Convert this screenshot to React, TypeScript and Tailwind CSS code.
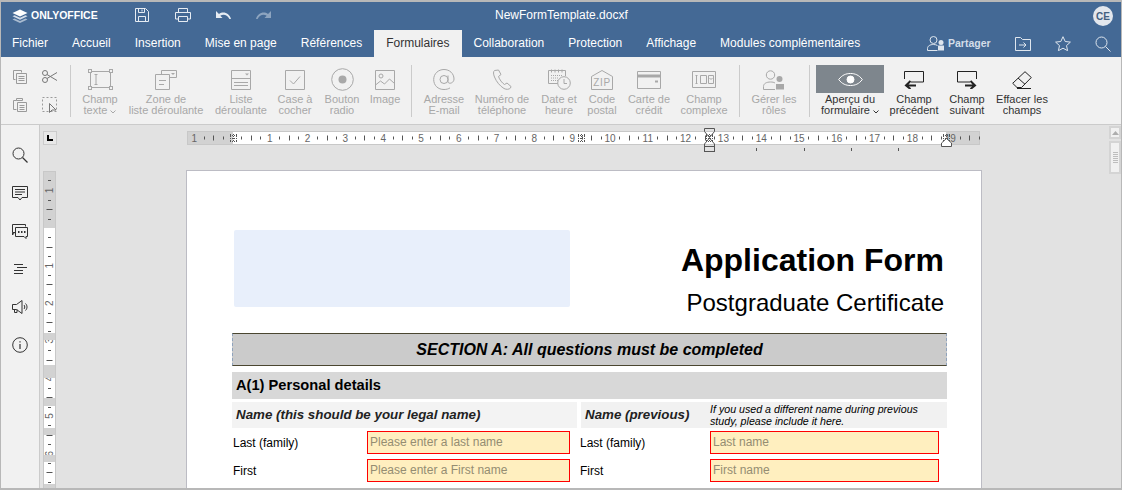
import React from "react";

const S = ({ w, h, children, c = "currentColor", cls = "" }: { w: number; h: number; children: React.ReactNode; c?: string; cls?: string }) => (
  <svg width={w} height={h} viewBox={`0 0 ${w} ${h}`} fill="none" stroke={c} strokeWidth={1} className={"block shrink-0 " + cls}>
    {children}
  </svg>
);

const Logo = () => (
  <S w={16} h={14}>
    <path d="M8 0.5 15.5 4 8 7.5 0.5 4Z" fill="#fff" stroke="none" />
    <path d="M2.5 6.2 8 8.8 13.5 6.2 15.5 7.2 8 10.8 0.5 7.2Z" fill="#d5deea" stroke="none" />
    <path d="M2.5 9.4 8 12 13.5 9.4 15.5 10.4 8 14 0.5 10.4Z" fill="#a9bbd0" stroke="none" />
  </S>
);
const Save = () => (
  <S w={14} h={14} c="#e6ecf3">
    <path d="M.5.5h10l3 3v10H.5z" />
    <path d="M3.5.5v4h6v-4M7 1.5v2M3.5 13.5v-5h7v5" />
  </S>
);
const Print = () => (
  <S w={16} h={14} c="#e6ecf3">
    <path d="M3.5 4V.5h9V4M3.5 11H.5V4.5h15V11h-3" />
    <path d="M3.5 8.5h9v5h-9z" />
  </S>
);
const Undo = ({ o = 1 }: { o?: number }) => (
  <svg width={15} height={8} viewBox="0 0 15 8" className="block" opacity={o}>
    <path d="M0 0v7h6.5L4.3 4.8C7 2.8 11 3.2 13.4 8H15C13.6 2.5 7.5-.5 3 3Z" fill="#e6ecf3" />
  </svg>
);
const ISize = ({ w, h, children }: { w: number; h: number; children: React.ReactNode }) => <S w={w} h={h}>{children}</S>;

const icons: Record<string, React.ReactNode> = {
  text: (
    <ISize w={25} h={21}>
      <rect x="2.5" y="2.5" width="20" height="16" />
      <g fill="#f1f1f1">
        <rect x=".5" y=".5" width="3" height="3" /><rect x="21.5" y=".5" width="3" height="3" />
        <rect x=".5" y="17.5" width="3" height="3" /><rect x="21.5" y="17.5" width="3" height="3" />
      </g>
      <path d="M6.5 5.5h3M6.5 15.5h3M8 5.5v10" />
    </ISize>
  ),
  combo: (
    <ISize w={22} h={20}>
      <path d="M.5 4.5h14v15H.5zM14.5 7.5h7V.5h-15v4" />
      <path d="M16 3l2 2 2-2z" fill="currentColor" stroke="none" />
      <path d="M4 10.5h7M4 14.5h5" />
    </ISize>
  ),
  list: (
    <ISize w={20} h={20}>
      <path d="M.5.5h19v19H.5zM.5 8.5h19" />
      <path d="M14 3.5l2 2 2-2z" fill="currentColor" stroke="none" />
      <path d="M3 12.5h14M3 15.5h14" />
    </ISize>
  ),
  check: (
    <ISize w={20} h={20}>
      <path d="M.5.5h19v19H.5z" />
      <path d="M5 10.5l3.5 3.5L15 6.5" />
    </ISize>
  ),
  radio: (
    <ISize w={23} h={23}>
      <circle cx="11.5" cy="11.5" r="10.8" />
      <circle cx="11.5" cy="11.5" r="4" fill="currentColor" stroke="none" />
    </ISize>
  ),
  image: (
    <ISize w={20} h={20}>
      <path d="M.5.5h19v19H.5z" />
      <circle cx="6" cy="6" r="2" />
      <path d="M.5 15l5-4 4 3 5-5 5 4.5" />
    </ISize>
  ),
  at: (
    <ISize w={22} h={21}>
      <circle cx="11" cy="10.5" r="4" />
      <path d="M15 6.5v6c0 3 6 2 6-2.5C21 4.5 16.5.5 11 .5S.7 4.5.7 10.5 5 20.5 11 20.5c2.5 0 4.5-.6 6-1.6" />
    </ISize>
  ),
  phone: (
    <ISize w={19} h={21}>
      <path d="M1.5 1.5C.2 2.5.2 5 1.5 8c2 5 5.5 9 9.5 11.5 2.5 1.3 5 1 6.5-.5l.5-1.5-4-3.5-2.5 1.5C9 14 6.5 10.500 5.500 7.500l2.500-2-2.500-4.500z" />
    </ISize>
  ),
  date: (
    <ISize w={23} h={21}>
      <path d="M13 14.500H.5V1.500h17V7" />
      <path d="M3.500.5v3M7 .5v3M10.500 .5v3M14 .5v3" />
      <path d="M3 6.500h12M3 9h8M3 11.500h8" strokeDasharray="1 1" />
      <circle cx="16" cy="14" r="6.300" fill="#f1f1f1" />
      <path d="M16 10v4.500h3" />
    </ISize>
  ),
  zip: (
    <svg width={22} height={20} viewBox="0 0 22 20" fill="none" stroke="currentColor" className="block">
      <path d="M.5 19.500V6.500L11 .5l10.500 6v13z" />
      <text x="11" y="16" textAnchor="middle" fontSize="10" fill="currentColor" stroke="none" letterSpacing=".6" fontFamily="'Liberation Sans',sans-serif">ZIP</text>
    </svg>
  ),
  card: (
    <ISize w={24} h={18}>
      <path d="M.5.5h23v17H.5z" />
      <path d="M.5 5h23" strokeWidth="3" />
      <path d="M18 10.500h3" strokeWidth="2" />
    </ISize>
  ),
  complex: (
    <ISize w={24} h={17}>
      <path d="M.5.5h23v16H.5zM8.500 4.500h6v8h-6zM16.500 4.500h5v8h-5z" />
      <path d="M3.500 4.500h2M3.500 12.500h2M4.500 4.500v8" />
      <path d="M17.500 7l1.500 1.500L20.500 7" />
    </ISize>
  ),
  roles: (
    <ISize w={22} h={20}>
      <circle cx="7.500" cy="5" r="4.200" />
      <path d="M.5 19.500v-3c0-3 3-4.500 7-4.500 2 0 3.500.3 4.500 1M.5 19.500h11.500" />
      <circle cx="16.500" cy="9" r="3" fill="currentColor" stroke="none" />
      <path d="M13 19.500v-5.500h8v5.500z" fill="currentColor" stroke="none" />
    </ISize>
  ),
  prev: (
    <S w={20} h={18} c="#222">
      <path d="M.5 8V.5h19V11H7" />
      <path d="M12 14.500H2M6.500 10l-4.500 4.500L6.500 18" strokeWidth="2" />
    </S>
  ),
  next: (
    <S w={20} h={18} c="#222">
      <path d="M19.500 8V.5H.5V11H13" />
      <path d="M8 14.500h10M13.500 10l4.500 4.500L13.500 18" strokeWidth="2" />
    </S>
  ),
  eraser: (
    <S w={20} h={18} c="#222">
      <path d="M13 .7l6.300 5.800L9.500 16.500H5L.7 12.300z" />
      <path d="M6 7l7 6.300" />
      <path d="M5 17.500h14" />
    </S>
  ),
};

type It = { w: number; l: string[]; i: string; on?: boolean; ch?: boolean };

const Item = ({ w, l, i, on, ch }: It) => (
  <div className={"flex flex-col items-center shrink-0 " + (on ? "text-[#333]" : "text-[#a8a8a8]")} style={{ width: w }}>
    <div className="h-[37px] pt-[8px] flex items-center justify-center pb-0">{icons[i]}</div>
    <div className="text-[11px] leading-[11px] whitespace-nowrap flex flex-col items-center">
      {l.map((t, k) => (
        <div key={k} className="flex items-center gap-[3px]">
          {t}
          {ch && k === l.length - 1 && (
            <svg width="6" height="4" viewBox="0 0 6 4" fill="none" stroke="currentColor" className="mt-[2px]"><path d="M.5.5 3 3 5.500.5" /></svg>
          )}
        </div>
      ))}
    </div>
  </div>
);

const Sep = ({ cls = "" }: { cls?: string }) => <div className={"w-px h-[52px] mt-[8px] bg-[#cbcbcb] shrink-0 " + cls} />;

const HRuler = () => {
  const els: React.ReactNode[] = [];
  for (let k = -1; k <= 19; k++) {
    const b = 45 + k * 37.8;
    if (k !== 0)
      els.push(<text key={"n" + k} x={b} y={10.500} textAnchor="middle" fontSize="10" fill="#666" fontFamily="'Liberation Sans',sans-serif">{Math.abs(k)}</text>);
    [[0.25, 3], [0.5, 5], [0.75, 3]].forEach(([f, h]) => {
      const x = Math.round(b + f * 37.8) + 0.5;
      els.push(<line key={k + "t" + f} x1={x} x2={x} y1={7 - h / 2} y2={7 + h / 2} stroke="#555" />);
    });
  }
  const grid = (x: number) => (
    <g key={x} stroke="#555">
      <path d={`M${x - 2.500} 3v8M${x + .500} 3v8M${x + 3.500} 3v8M${x - 3} 4.500h7M${x - 3} 7.500h7M${x - 3} 10.500h7`} strokeDasharray="1 1" />
    </g>
  );
  return (
    <svg width={793} height={14} viewBox="0 0 793 14" className="block overflow-visible shrink-0">
      <rect x=".5" y=".5" width="792" height="13" fill="#d2d2d2" stroke="#c8c8c8" />
      <rect x="46" y="1" width="713" height="12" fill="#fff" />
      {els}
      {grid(46)}
      {grid(394)}
      {grid(522)}
      {grid(759)}
      <path d="M517.500-2.500h10v3l-5 6-5-6z" fill="none" stroke="#555" />
      <path d="M522.500 7l5 6v2.500h-10V13z" fill="none" stroke="#555" />
      <rect x="517.500" y="15.500" width="10" height="5" fill="#e2e2e2" stroke="#555" />
      <path d="M754.500 15.500V12l5-4.500 5 4.500v3.500z" fill="#fff" stroke="#555" />
      {[569, 617, 664, 711].map((x) => <line key={x} x1={x + .5} x2={x + .5} y1={17} y2={20} stroke="#555" />)}
    </svg>
  );
};

const VRuler = () => {
  const cover: [number, number][] = [[333, 340], [365, 378], [398, 406], [428, 435], [455, 462], [484, 490]];
  const els: React.ReactNode[] = [];
  els.push(<line key="top" y1={9.500} y2={9.500} x1={5} x2={8} stroke="#555" />);
  for (let k = -1; k <= 7; k++) {
    const b = 57 + k * 37.6;
    if (k !== 0 && b < 319)
      els.push(<text key={"n" + k} x={0} y={0} transform={`translate(9.500 ${b}) rotate(-90)`} textAnchor="middle" fontSize="10" fill="#666" fontFamily="'Liberation Sans',sans-serif">{Math.abs(k)}</text>);
    [[0.25, 3], [0.5, 6], [0.75, 3]].forEach(([f, h]) => {
      const y = Math.round(b + f * 37.6) + 0.5;
      els.push(<line key={k + "t" + f} y1={y} y2={y} x1={6.500 - h / 2} x2={6.500 + h / 2} stroke="#555" />);
    });
  }
  return (
    <svg width={13} height={319} viewBox="0 0 13 319" className="block shrink-0">
      <rect x=".5" y=".5" width="12" height="320" fill="#d2d2d2" stroke="#c8c8c8" />
      <rect x="1" y="57" width="11" height="262" fill="#fff" />
      {els}
      {cover.map(([a, b]) => <rect key={a} x="1" y={a - 171} width="11" height={b - a} fill="#d2d2d2" />)}
    </svg>
  );
};

const side: React.ReactNode[] = [
  <S w={16} h={16} c="#333"><circle cx="6.500" cy="6.500" r="5.500" /><path d="M10.500 10.500l5 5" strokeWidth="1.300" /></S>,
  <S w={16} h={15} c="#333"><path d="M.5.5h15v11h-5.500L8 14l-2-2.500H.5z" /><path d="M3 3.500h10M3 6h10M3 8.500h7" /></S>,
  <S w={16} h={15} c="#333"><path d="M3.500 8.500H.5V.5h13v2" /><path d="M.5 8.500V11l2-2.500" /><path d="M3.500 3.500h12v9h-1.500v2l-2-2h-8.500z" /><path d="M6 8h1.500M9 8h1.500M12 8h1.500" strokeWidth="2" /></S>,
  <S w={13} h={10} c="#333"><path d="M0 .5h9M3 3.500h10M0 6.500h9M0 9.500h9" /></S>,
  <S w={16} h={14} c="#333"><path d="M.5 4.500h4L10 .5v13L4.500 9.500h-4zM2.500 9.500v3h2.500v-3M12 5c1 1 1 3 0 4M13.500 3.500c2 2 2 5 0 7" /></S>,
  <S w={16} h={16} c="#333"><circle cx="8" cy="8" r="7.300" /><path d="M8 7v5M8 4.200v1.400" strokeWidth="1.200" /></S>,
];

const Field = ({ t, cls }: { t: string; cls: string }) => (
  <div className={"h-[23px] border border-[#ff0000] bg-[#ffefbf] text-[12px] leading-[20px] pl-[2px] text-[#948d72] shrink-0 " + cls}>{t}</div>
);

export default function App() {
  const tabs = ["Fichier", "Accueil", "Insertion", "Mise en page", "Références", "Formulaires", "Collaboration", "Protection", "Affichage", "Modules complémentaires"];
  return (
    <div className="w-[1122px] h-[490px] overflow-hidden flex flex-col border-t-2 border-x border-b-2 border-[#b8b8b8] bg-[#e2e2e2] text-[#333] [font-family:'Liberation_Sans',Arial,sans-serif]">
      <div className="h-[27px] bg-[#446995] flex items-center text-white shrink-0 relative">
        <div className="ml-[11px] flex items-center gap-[3px] w-[123px]">
          <Logo />
          <span className="font-bold text-[10.5px] leading-none text-white">ONLYOFFICE</span>
        </div>
        <div className="flex items-center w-[40px] -mt-[2px]"><Save /></div>
        <div className="flex items-center w-[41px] -mt-[2px]"><Print /></div>
        <div className="flex items-center w-[40px] -mt-[2px]"><Undo /></div>
        <div className="flex items-center w-[40px] -mt-[2px] -scale-x-100 justify-end"><Undo o={0.45} /></div>
        <div className="ml-[199px] text-[12px] leading-none -mt-[2px] w-[150px]">NewFormTemplate.docxf</div>
        <div className="absolute left-[1092px] top-[4px] w-[20px] h-[20px] rounded-full bg-[#e3e7ed] text-[#44607f] text-[10px] font-bold flex items-center justify-center">CE</div>
      </div>
      <div className="h-[28px] bg-[#446995] flex items-end shrink-0">
        <div className="w-0 -mr-px" />
        {tabs.map((t) => (
          <div key={t} className={"px-[12px] h-[27px] text-[12px] leading-[27px] whitespace-nowrap " + (t === "Formulaires" ? "bg-[#f1f1f1] text-[#333]" : "text-white")}>{t}</div>
        ))}
        <div className="ml-auto flex items-center h-[27px] text-[#dfe6ee]">
          <svg width="18" height="15" viewBox="0 0 18 15" fill="none" stroke="currentColor" className="block"><circle cx="6.500" cy="4" r="3.500" /><path d="M.5 14.500v-2c0-2.500 2.500-4 6-4 1.500 0 3 .3 4 1M.5 14.500h10" /><circle cx="14" cy="6.500" r="2.500" fill="currentColor" stroke="none" /><path d="M11 14.500v-5h6v5z" fill="currentColor" stroke="none" /></svg>
          <span className="ml-[3px] text-[10.5px] font-bold w-[67px] text-[#d3dde8]">Partager</span>
          <svg width="16" height="14" viewBox="0 0 16 14" fill="none" stroke="currentColor" className="block w-[16px]"><path d="M.5 13.500V.5h5l2 2h8v11zM4 8h7M8.500 5.500 11 8l-2.500 2.500" /></svg>
          <svg width="16" height="15" viewBox="0 0 16 15" fill="none" stroke="currentColor" className="block ml-[24px]"><path d="M8 .7l2.200 4.800 5.200.6-3.900 3.500 1.100 5.100L8 12.200l-4.600 2.500 1.100-5.100L.6 6.100l5.200-.6z" /></svg>
          <svg width="16" height="16" viewBox="0 0 16 16" fill="none" stroke="currentColor" className="block ml-[24px] mr-[10px]"><circle cx="6.500" cy="6.500" r="5.500" /><path d="M10.500 10.500l5 5" /></svg>
        </div>
      </div>
      <div className="h-[68px] bg-[#f1f1f1] border-b border-[#cbcbcb] flex shrink-0">
        <div className="w-[69px] shrink-0 grid grid-cols-[29px_30px] pl-[12px] pt-[13px] text-[#9a9a9a] grid-rows-[27px_20px]">
          <S w={14} h={14}><path d="M.5.5h8v2M.5.5v9h2" /><path d="M3.500 3.500h10v10h-10zM5.500 6.500h6M5.500 8.500h6M5.500 10.500h6" /></S>
          <S w={15} h={13} c="#777"><circle cx="3" cy="3" r="2.500" /><circle cx="3" cy="10" r="2.500" /><path d="M5 4.500 15 10.500M5 8.500 15 2.500" /></S>
          <S w={14} h={15}><path d="M3.500 3.500H.5v9h3M3.500 1.500h6v2h-6z" /><path d="M4.500 5.500h9v9h-9zM6.500 8.500h5M6.500 10.500h5M6.500 12.500h5" /></S>
          <S w={15} h={17}><path d="M.5.500h14v14H.5z" strokeDasharray="2 2" /><path d="M7.500 6.500v9l2.500-2.500h4z" fill="#f1f1f1" stroke="#777" /></S>
        </div>
        <Sep cls="mr-px" />
        <Item w={56} l={["Champ", "texte"]} i="text" ch />
        <Item w={76} l={["Zone de", "liste déroulante"]} i="combo" />
        <Item w={74} l={["Liste", "déroulante"]} i="list" />
        <Item w={34} l={["Case à", "cocher"]} i="check" />
        <Item w={60} l={["Bouton", "radio"]} i="radio" />
        <Item w={26} l={["Image"]} i="image" />
        <Sep cls="ml-[13px] mr-px" />
        <Item w={62} l={["Adresse", "E-mail"]} i="at" />
        <Item w={54} l={["Numéro de", "téléphone"]} i="phone" />
        <Item w={60} l={["Date et", "heure"]} i="date" />
        <Item w={26} l={["Code", "postal"]} i="zip" />
        <Item w={68} l={["Carte de", "crédit"]} i="card" />
        <Item w={42} l={["Champ", "complexe"]} i="complex" />
        <Sep cls="ml-[14px]" />
        <Item w={68} l={["Gérer les", "rôles"]} i="roles" />
        <Sep cls="ml-px" />
        <div className="w-[80px] shrink-0 flex flex-col items-center text-[#333]">
          <div className="mt-[8px] w-[68px] h-[28px] bg-[#7e868d] flex items-center justify-center">
            <svg width="25" height="13" viewBox="0 0 25 13" fill="none" stroke="#fff" className="block"><path d="M.7 6.500C4 2 8 .5 12.500.5S21 2 24.300 6.500C21 11 17 12.500 12.500 12.500S4 11 .7 6.500z" /><circle cx="12.500" cy="6.500" r="3.500" fill="#fff" /></svg>
          </div>
          <div className="mt-[1px] text-[11px] leading-[11px] text-center whitespace-nowrap flex flex-col items-center">
            <div>Aperçu du</div>
            <div className="flex items-center gap-[3px]">formulaire<svg width="6" height="4" viewBox="0 0 6 4" fill="none" stroke="currentColor" className="mt-[2px]"><path d="M.5.5 3 3 5.500.5" /></svg></div>
          </div>
        </div>
        <Item w={48} l={["Champ", "précédent"]} i="prev" on />
        <Item w={58} l={["Champ", "suivant"]} i="next" on />
        <Item w={52} l={["Effacer les", "champs"]} i="eraser" on />
      </div>
      <div className="flex-1 min-h-0 flex relative">
        <div className="w-[39px] bg-[#f1f1f1] border-r border-[#cbcbcb] shrink-0 flex flex-col items-center pt-[11px]">
          {side.map((n, i) => <div key={i} className="h-[38px] shrink-0 flex items-center justify-center">{n}</div>)}
        </div>
        <div className="flex-1 min-w-0 flex flex-col">
          <div className="h-[45px] shrink-0 flex pt-[6px] pl-[3px]">
            <div className="w-[14px] h-[14px] border border-[#cbcbcb] bg-[#e8e8e8] shrink-0 flex items-center justify-center">
              <div className="w-[6px] h-[6px] border-l-2 border-b-2 border-black" />
            </div>
            <div className="ml-[130px]"><HRuler /></div>
          </div>
          <div className="flex-1 min-h-0 flex">
            <div className="ml-[3px] pt-[1px] w-[143px] shrink-0"><VRuler /></div>
            <div className="w-[796px] h-[400px] bg-white border border-[#bcbcc4] shrink-0 pl-[45px] pt-[59px] text-black">
              <div className="w-[715px]">
                <div className="flex justify-between h-[77px]">
                  <div className="ml-[2px] w-[336px] h-[77px] bg-[#e8effb] rounded-[2px]" />
                  <div className="text-right pr-[3px]">
                    <div className="font-bold text-[32px] leading-[36px] mt-[12px]">Application Form</div>
                    <div className="text-[24px] leading-[26px] mt-[12px]">Postgraduate Certificate</div>
                  </div>
                </div>
                <div className="mt-[26px] h-[33px] bg-[#cbcbcb] border-y border-[#4a4630] border-x border-x-[#8fa3bd] flex items-center justify-center font-bold italic text-[16px] [border-left-style:dashed] [border-right-style:dashed]">SECTION A: All questions must be completed</div>
                <div className="mt-[6px] h-[27px] bg-[#d8d8d8] font-bold text-[14.67px] leading-[27px] pl-[4px]">A(1) Personal details</div>
                <div className="mt-[3px] h-[26px] flex justify-between">
                  <div className="w-[345px] bg-[#f3f3f3] pl-[4px] font-bold italic text-[13.33px] leading-[26px] text-[#222]">Name (this should be your legal name)</div>
                  <div className="w-[366px] bg-[#f1f1f1] flex pl-[4px]">
                    <div className="w-[125px] font-bold italic text-[13.33px] leading-[26px] text-[#222]">Name (previous)</div>
                    <div className="italic text-[10.67px] leading-[12px] pt-[1px] whitespace-nowrap">If you used a different name during previous<br />study, please include it here.</div>
                  </div>
                </div>
                <div className="mt-[3px] flex items-center text-[12px]">
                  <div className="w-[135px] pl-[1px] shrink-0">Last (family)</div>
                  <Field t="Please enter a last name" cls="w-[203px]" />
                  <div className="w-[130px] ml-[10px] shrink-0">Last (family)</div>
                  <Field t="Last name" cls="w-[229px]" />
                </div>
                <div className="mt-[5px] flex items-center text-[12px]">
                  <div className="w-[135px] pl-[1px] shrink-0">First</div>
                  <Field t="Please enter a First name" cls="w-[203px]" />
                  <div className="w-[130px] ml-[10px] shrink-0">First</div>
                  <Field t="First name" cls="w-[229px]" />
                </div>
              </div>
            </div>
          </div>
        </div>
        <div className="absolute right-0 top-[1px] w-[12px] flex flex-col gap-[2px]">
          <div className="h-[13px] border-2 border-[#d4d4d4] bg-[#f1f1f1] flex items-center justify-center">
            <svg width="7" height="4" viewBox="0 0 7 4"><path d="M0 4 3.500 0 7 4z" fill="#adadad" /></svg>
          </div>
          <div className="h-[33px] border-2 border-[#d4d4d4] bg-[#f1f1f1] flex flex-col items-center justify-center gap-px">
            {[0, 1, 2, 3, 4, 5].map((i) => <div key={i} className="w-[5px] h-px bg-[#bdbdbd] shrink-0" />)}
          </div>
        </div>
      </div>
    </div>
  );
}
